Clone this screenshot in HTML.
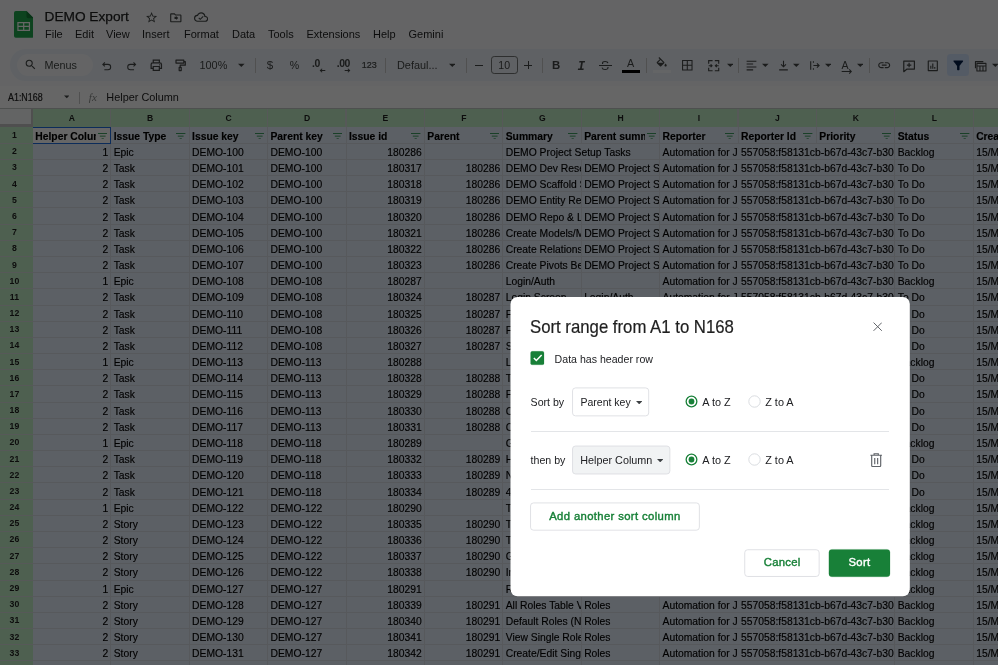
<!DOCTYPE html>
<html lang="en"><head><meta charset="utf-8"><title>DEMO Export - Google Sheets</title>
<style>
*{box-sizing:border-box;margin:0;padding:0}
html,body{width:998px;height:665px;overflow:hidden;background:#f9fbfd;font-family:"Liberation Sans",sans-serif;color:#1f1f1f}
body{position:relative}
.abs,#grid div,#chrome div,#chrome svg,#dialog div,#dialog svg{position:absolute}
#chrome{position:absolute;left:0;top:0;width:998px;height:108.3px;background:#f9fbfd;will-change:transform}
#grid{position:absolute;left:0;top:0;width:998px;height:665px;overflow:hidden;will-change:transform}
.colhdr{background:#c3f0c8}
.rowhdr{background:#c3f0c8}
.corner{left:0;top:108.3px;width:32.7px;height:18.6px;background:#f8f9fa;border-right:2.7px solid #c6c6c6;border-bottom:3px solid #c6c6c6}
.cells{background:#e7f0fd}
.cl{top:108.3px;height:18.8px;line-height:21.2px;text-align:center;font-size:8.6px;font-weight:700;color:#1f1f1f}
.rn{left:0;width:28.8px;height:16.15px;line-height:16.4px;text-align:center;font-size:8.7px;font-weight:700;color:#1f1f1f}
.vl{top:127.1px;width:1px;height:540px;background:#dadfe7}
.vlh{top:108.3px;width:1.2px;height:18.8px;background:#d8dedb}
.hl{left:32.7px;width:970px;height:1px;background:#dadfe7}
.hlh{left:0;width:32.7px;height:1px;background:#d8dedb}
.c{height:15.15px;margin-top:0.6px;line-height:18.6px;font-size:10.34px;white-space:nowrap;overflow:hidden;padding:0 2.3px 0 2.7px;color:#000;-webkit-text-stroke:.15px #000}
.c.r{text-align:right}
.c.ov{background:#e7f0fd}
.c.hd{font-weight:700}
.c.hd span{position:absolute;left:2.7px;top:0;width:60.5px;overflow:hidden;white-space:nowrap}
.fi{position:absolute;right:2.8px;top:5.1px;width:9.4px;height:6.3px}
.active{border:1.7px solid #1f6fe0;border-left-width:0;background:#fff}
#overlay{position:absolute;left:0;top:0;width:998px;height:665px;background:rgba(0,0,0,.6)}
#dialog{position:absolute;left:510px;top:297px;width:400px;height:300px;color:#202124;will-change:transform}
</style></head><body>
<div id="grid">
<div class="colhdr" style="left:0;top:108.30px;width:998px;height:18.80px"></div>
<div class="rowhdr" style="left:0;top:127.10px;width:32.60px;height:537.90px"></div>
<div class="corner"></div>
<div class="cells" style="left:32.60px;top:127.10px;width:965.40px;height:537.90px"></div>
<div class="cl" style="left:32.60px;width:78.41px">A</div>
<div class="vl" style="left:110.41px"></div>
<div class="vlh" style="left:110.20px"></div>
<div class="cl" style="left:111.00px;width:78.41px">B</div>
<div class="vl" style="left:188.81px"></div>
<div class="vlh" style="left:188.61px"></div>
<div class="cl" style="left:189.41px;width:78.41px">C</div>
<div class="vl" style="left:267.21px"></div>
<div class="vlh" style="left:267.01px"></div>
<div class="cl" style="left:267.81px;width:78.41px">D</div>
<div class="vl" style="left:345.62px"></div>
<div class="vlh" style="left:345.42px"></div>
<div class="cl" style="left:346.22px;width:78.41px">E</div>
<div class="vl" style="left:424.02px"></div>
<div class="vlh" style="left:423.82px"></div>
<div class="cl" style="left:424.62px;width:78.41px">F</div>
<div class="vl" style="left:502.43px"></div>
<div class="vlh" style="left:502.23px"></div>
<div class="cl" style="left:503.03px;width:78.41px">G</div>
<div class="vl" style="left:580.84px"></div>
<div class="vlh" style="left:580.64px"></div>
<div class="cl" style="left:581.44px;width:78.41px">H</div>
<div class="vl" style="left:659.24px"></div>
<div class="vlh" style="left:659.04px"></div>
<div class="cl" style="left:659.84px;width:78.41px">I</div>
<div class="vl" style="left:737.64px"></div>
<div class="vlh" style="left:737.45px"></div>
<div class="cl" style="left:738.25px;width:78.41px">J</div>
<div class="vl" style="left:816.05px"></div>
<div class="vlh" style="left:815.85px"></div>
<div class="cl" style="left:816.65px;width:78.41px">K</div>
<div class="vl" style="left:894.45px"></div>
<div class="vlh" style="left:894.25px"></div>
<div class="cl" style="left:895.06px;width:78.41px">L</div>
<div class="vl" style="left:972.86px"></div>
<div class="vlh" style="left:972.66px"></div>
<div class="cl" style="left:973.46px;width:78.41px">M</div>
<div class="vl" style="left:1051.27px"></div>
<div class="vlh" style="left:1051.07px"></div>
<div class="rn" style="top:127.10px">1</div>
<div class="hl" style="top:142.78px"></div>
<div class="hlh" style="top:142.78px"></div>
<div class="rn" style="top:143.28px">2</div>
<div class="hl" style="top:158.95px"></div>
<div class="hlh" style="top:158.95px"></div>
<div class="rn" style="top:159.45px">3</div>
<div class="hl" style="top:175.12px"></div>
<div class="hlh" style="top:175.12px"></div>
<div class="rn" style="top:175.62px">4</div>
<div class="hl" style="top:191.30px"></div>
<div class="hlh" style="top:191.30px"></div>
<div class="rn" style="top:191.80px">5</div>
<div class="hl" style="top:207.48px"></div>
<div class="hlh" style="top:207.48px"></div>
<div class="rn" style="top:207.97px">6</div>
<div class="hl" style="top:223.65px"></div>
<div class="hlh" style="top:223.65px"></div>
<div class="rn" style="top:224.15px">7</div>
<div class="hl" style="top:239.83px"></div>
<div class="hlh" style="top:239.83px"></div>
<div class="rn" style="top:240.32px">8</div>
<div class="hl" style="top:256.00px"></div>
<div class="hlh" style="top:256.00px"></div>
<div class="rn" style="top:256.50px">9</div>
<div class="hl" style="top:272.18px"></div>
<div class="hlh" style="top:272.18px"></div>
<div class="rn" style="top:272.68px">10</div>
<div class="hl" style="top:288.35px"></div>
<div class="hlh" style="top:288.35px"></div>
<div class="rn" style="top:288.85px">11</div>
<div class="hl" style="top:304.53px"></div>
<div class="hlh" style="top:304.53px"></div>
<div class="rn" style="top:305.02px">12</div>
<div class="hl" style="top:320.70px"></div>
<div class="hlh" style="top:320.70px"></div>
<div class="rn" style="top:321.20px">13</div>
<div class="hl" style="top:336.88px"></div>
<div class="hlh" style="top:336.88px"></div>
<div class="rn" style="top:337.38px">14</div>
<div class="hl" style="top:353.05px"></div>
<div class="hlh" style="top:353.05px"></div>
<div class="rn" style="top:353.55px">15</div>
<div class="hl" style="top:369.23px"></div>
<div class="hlh" style="top:369.23px"></div>
<div class="rn" style="top:369.73px">16</div>
<div class="hl" style="top:385.40px"></div>
<div class="hlh" style="top:385.40px"></div>
<div class="rn" style="top:385.90px">17</div>
<div class="hl" style="top:401.57px"></div>
<div class="hlh" style="top:401.57px"></div>
<div class="rn" style="top:402.08px">18</div>
<div class="hl" style="top:417.75px"></div>
<div class="hlh" style="top:417.75px"></div>
<div class="rn" style="top:418.25px">19</div>
<div class="hl" style="top:433.93px"></div>
<div class="hlh" style="top:433.93px"></div>
<div class="rn" style="top:434.42px">20</div>
<div class="hl" style="top:450.10px"></div>
<div class="hlh" style="top:450.10px"></div>
<div class="rn" style="top:450.60px">21</div>
<div class="hl" style="top:466.28px"></div>
<div class="hlh" style="top:466.28px"></div>
<div class="rn" style="top:466.77px">22</div>
<div class="hl" style="top:482.45px"></div>
<div class="hlh" style="top:482.45px"></div>
<div class="rn" style="top:482.95px">23</div>
<div class="hl" style="top:498.63px"></div>
<div class="hlh" style="top:498.63px"></div>
<div class="rn" style="top:499.12px">24</div>
<div class="hl" style="top:514.80px"></div>
<div class="hlh" style="top:514.80px"></div>
<div class="rn" style="top:515.30px">25</div>
<div class="hl" style="top:530.98px"></div>
<div class="hlh" style="top:530.98px"></div>
<div class="rn" style="top:531.48px">26</div>
<div class="hl" style="top:547.15px"></div>
<div class="hlh" style="top:547.15px"></div>
<div class="rn" style="top:547.65px">27</div>
<div class="hl" style="top:563.32px"></div>
<div class="hlh" style="top:563.32px"></div>
<div class="rn" style="top:563.83px">28</div>
<div class="hl" style="top:579.50px"></div>
<div class="hlh" style="top:579.50px"></div>
<div class="rn" style="top:580.00px">29</div>
<div class="hl" style="top:595.67px"></div>
<div class="hlh" style="top:595.67px"></div>
<div class="rn" style="top:596.18px">30</div>
<div class="hl" style="top:611.85px"></div>
<div class="hlh" style="top:611.85px"></div>
<div class="rn" style="top:612.35px">31</div>
<div class="hl" style="top:628.02px"></div>
<div class="hlh" style="top:628.02px"></div>
<div class="rn" style="top:628.52px">32</div>
<div class="hl" style="top:644.20px"></div>
<div class="hlh" style="top:644.20px"></div>
<div class="rn" style="top:644.70px">33</div>
<div class="hl" style="top:660.38px"></div>
<div class="hlh" style="top:660.38px"></div>
<div class="rn" style="top:660.88px">34</div>
<div class="hl" style="top:676.55px"></div>
<div class="hlh" style="top:676.55px"></div>
<div class="hl" style="top:692.73px"></div>
<div class="hlh" style="top:692.73px"></div>
<div class="active" style="left:32.60px;top:127.10px;width:78.81px;height:17.07px"></div>
<div class="c hd" style="left:32.60px;top:127.10px;width:77.41px"><span>Helper Column</span><svg class="fi" viewBox="0 0 12 8"><path d="M0 .6h12M2.3 4h7.4M4.6 7.4h2.8" stroke="#2c9650" stroke-width="1.15" fill="none"/></svg></div>
<div class="c hd" style="left:111.00px;top:127.10px;width:77.41px"><span>Issue Type</span><svg class="fi" viewBox="0 0 12 8"><path d="M0 .6h12M2.3 4h7.4M4.6 7.4h2.8" stroke="#2c9650" stroke-width="1.15" fill="none"/></svg></div>
<div class="c hd" style="left:189.41px;top:127.10px;width:77.41px"><span>Issue key</span><svg class="fi" viewBox="0 0 12 8"><path d="M0 .6h12M2.3 4h7.4M4.6 7.4h2.8" stroke="#2c9650" stroke-width="1.15" fill="none"/></svg></div>
<div class="c hd" style="left:267.81px;top:127.10px;width:77.41px"><span>Parent key</span><svg class="fi" viewBox="0 0 12 8"><path d="M0 .6h12M2.3 4h7.4M4.6 7.4h2.8" stroke="#2c9650" stroke-width="1.15" fill="none"/></svg></div>
<div class="c hd" style="left:346.22px;top:127.10px;width:77.41px"><span>Issue id</span><svg class="fi" viewBox="0 0 12 8"><path d="M0 .6h12M2.3 4h7.4M4.6 7.4h2.8" stroke="#2c9650" stroke-width="1.15" fill="none"/></svg></div>
<div class="c hd" style="left:424.62px;top:127.10px;width:77.41px"><span>Parent</span><svg class="fi" viewBox="0 0 12 8"><path d="M0 .6h12M2.3 4h7.4M4.6 7.4h2.8" stroke="#2c9650" stroke-width="1.15" fill="none"/></svg></div>
<div class="c hd" style="left:503.03px;top:127.10px;width:77.41px"><span>Summary</span><svg class="fi" viewBox="0 0 12 8"><path d="M0 .6h12M2.3 4h7.4M4.6 7.4h2.8" stroke="#2c9650" stroke-width="1.15" fill="none"/></svg></div>
<div class="c hd" style="left:581.44px;top:127.10px;width:77.41px"><span>Parent summary</span><svg class="fi" viewBox="0 0 12 8"><path d="M0 .6h12M2.3 4h7.4M4.6 7.4h2.8" stroke="#2c9650" stroke-width="1.15" fill="none"/></svg></div>
<div class="c hd" style="left:659.84px;top:127.10px;width:77.41px"><span>Reporter</span><svg class="fi" viewBox="0 0 12 8"><path d="M0 .6h12M2.3 4h7.4M4.6 7.4h2.8" stroke="#2c9650" stroke-width="1.15" fill="none"/></svg></div>
<div class="c hd" style="left:738.25px;top:127.10px;width:77.41px"><span>Reporter Id</span><svg class="fi" viewBox="0 0 12 8"><path d="M0 .6h12M2.3 4h7.4M4.6 7.4h2.8" stroke="#2c9650" stroke-width="1.15" fill="none"/></svg></div>
<div class="c hd" style="left:816.65px;top:127.10px;width:77.41px"><span>Priority</span><svg class="fi" viewBox="0 0 12 8"><path d="M0 .6h12M2.3 4h7.4M4.6 7.4h2.8" stroke="#2c9650" stroke-width="1.15" fill="none"/></svg></div>
<div class="c hd" style="left:895.06px;top:127.10px;width:77.41px"><span>Status</span><svg class="fi" viewBox="0 0 12 8"><path d="M0 .6h12M2.3 4h7.4M4.6 7.4h2.8" stroke="#2c9650" stroke-width="1.15" fill="none"/></svg></div>
<div class="c hd" style="left:973.46px;top:127.10px;width:77.41px"><span>Created</span><svg class="fi" viewBox="0 0 12 8"><path d="M0 .6h12M2.3 4h7.4M4.6 7.4h2.8" stroke="#2c9650" stroke-width="1.15" fill="none"/></svg></div>
<div class="c r" style="left:32.60px;top:143.28px;width:77.91px">1</div>
<div class="c" style="left:111.00px;top:143.28px;width:77.91px">Epic</div>
<div class="c" style="left:189.41px;top:143.28px;width:77.91px">DEMO-100</div>
<div class="c" style="left:267.81px;top:143.28px;width:77.91px">DEMO-100</div>
<div class="c r" style="left:346.22px;top:143.28px;width:77.91px">180286</div>
<div class="c ov" style="left:503.03px;top:143.28px;width:155.81px">DEMO Project Setup Tasks</div>
<div class="c" style="left:659.84px;top:143.28px;width:77.91px">Automation for Jira</div>
<div class="c ov" style="left:738.25px;top:143.28px;width:155.81px">557058:f58131cb-b67d-43c7-b30</div>
<div class="c" style="left:895.06px;top:143.28px;width:77.91px">Backlog</div>
<div class="c" style="left:973.46px;top:143.28px;width:77.91px">15/M</div>
<div class="c r" style="left:32.60px;top:159.45px;width:77.91px">2</div>
<div class="c" style="left:111.00px;top:159.45px;width:77.91px">Task</div>
<div class="c" style="left:189.41px;top:159.45px;width:77.91px">DEMO-101</div>
<div class="c" style="left:267.81px;top:159.45px;width:77.91px">DEMO-100</div>
<div class="c r" style="left:346.22px;top:159.45px;width:77.91px">180317</div>
<div class="c r" style="left:424.62px;top:159.45px;width:77.91px">180286</div>
<div class="c" style="left:503.03px;top:159.45px;width:77.91px">DEMO Dev Research</div>
<div class="c" style="left:581.44px;top:159.45px;width:77.91px">DEMO Project Setup Tasks</div>
<div class="c" style="left:659.84px;top:159.45px;width:77.91px">Automation for Jira</div>
<div class="c ov" style="left:738.25px;top:159.45px;width:155.81px">557058:f58131cb-b67d-43c7-b30</div>
<div class="c" style="left:895.06px;top:159.45px;width:77.91px">To Do</div>
<div class="c" style="left:973.46px;top:159.45px;width:77.91px">15/M</div>
<div class="c r" style="left:32.60px;top:175.62px;width:77.91px">2</div>
<div class="c" style="left:111.00px;top:175.62px;width:77.91px">Task</div>
<div class="c" style="left:189.41px;top:175.62px;width:77.91px">DEMO-102</div>
<div class="c" style="left:267.81px;top:175.62px;width:77.91px">DEMO-100</div>
<div class="c r" style="left:346.22px;top:175.62px;width:77.91px">180318</div>
<div class="c r" style="left:424.62px;top:175.62px;width:77.91px">180286</div>
<div class="c" style="left:503.03px;top:175.62px;width:77.91px">DEMO Scaffold Setup</div>
<div class="c" style="left:581.44px;top:175.62px;width:77.91px">DEMO Project Setup Tasks</div>
<div class="c" style="left:659.84px;top:175.62px;width:77.91px">Automation for Jira</div>
<div class="c ov" style="left:738.25px;top:175.62px;width:155.81px">557058:f58131cb-b67d-43c7-b30</div>
<div class="c" style="left:895.06px;top:175.62px;width:77.91px">To Do</div>
<div class="c" style="left:973.46px;top:175.62px;width:77.91px">15/M</div>
<div class="c r" style="left:32.60px;top:191.80px;width:77.91px">2</div>
<div class="c" style="left:111.00px;top:191.80px;width:77.91px">Task</div>
<div class="c" style="left:189.41px;top:191.80px;width:77.91px">DEMO-103</div>
<div class="c" style="left:267.81px;top:191.80px;width:77.91px">DEMO-100</div>
<div class="c r" style="left:346.22px;top:191.80px;width:77.91px">180319</div>
<div class="c r" style="left:424.62px;top:191.80px;width:77.91px">180286</div>
<div class="c" style="left:503.03px;top:191.80px;width:77.91px">DEMO Entity Relations</div>
<div class="c" style="left:581.44px;top:191.80px;width:77.91px">DEMO Project Setup Tasks</div>
<div class="c" style="left:659.84px;top:191.80px;width:77.91px">Automation for Jira</div>
<div class="c ov" style="left:738.25px;top:191.80px;width:155.81px">557058:f58131cb-b67d-43c7-b30</div>
<div class="c" style="left:895.06px;top:191.80px;width:77.91px">To Do</div>
<div class="c" style="left:973.46px;top:191.80px;width:77.91px">15/M</div>
<div class="c r" style="left:32.60px;top:207.97px;width:77.91px">2</div>
<div class="c" style="left:111.00px;top:207.97px;width:77.91px">Task</div>
<div class="c" style="left:189.41px;top:207.97px;width:77.91px">DEMO-104</div>
<div class="c" style="left:267.81px;top:207.97px;width:77.91px">DEMO-100</div>
<div class="c r" style="left:346.22px;top:207.97px;width:77.91px">180320</div>
<div class="c r" style="left:424.62px;top:207.97px;width:77.91px">180286</div>
<div class="c" style="left:503.03px;top:207.97px;width:77.91px">DEMO Repo &amp; Labels</div>
<div class="c" style="left:581.44px;top:207.97px;width:77.91px">DEMO Project Setup Tasks</div>
<div class="c" style="left:659.84px;top:207.97px;width:77.91px">Automation for Jira</div>
<div class="c ov" style="left:738.25px;top:207.97px;width:155.81px">557058:f58131cb-b67d-43c7-b30</div>
<div class="c" style="left:895.06px;top:207.97px;width:77.91px">To Do</div>
<div class="c" style="left:973.46px;top:207.97px;width:77.91px">15/M</div>
<div class="c r" style="left:32.60px;top:224.15px;width:77.91px">2</div>
<div class="c" style="left:111.00px;top:224.15px;width:77.91px">Task</div>
<div class="c" style="left:189.41px;top:224.15px;width:77.91px">DEMO-105</div>
<div class="c" style="left:267.81px;top:224.15px;width:77.91px">DEMO-100</div>
<div class="c r" style="left:346.22px;top:224.15px;width:77.91px">180321</div>
<div class="c r" style="left:424.62px;top:224.15px;width:77.91px">180286</div>
<div class="c" style="left:503.03px;top:224.15px;width:77.91px">Create Models/Migrations</div>
<div class="c" style="left:581.44px;top:224.15px;width:77.91px">DEMO Project Setup Tasks</div>
<div class="c" style="left:659.84px;top:224.15px;width:77.91px">Automation for Jira</div>
<div class="c ov" style="left:738.25px;top:224.15px;width:155.81px">557058:f58131cb-b67d-43c7-b30</div>
<div class="c" style="left:895.06px;top:224.15px;width:77.91px">To Do</div>
<div class="c" style="left:973.46px;top:224.15px;width:77.91px">15/M</div>
<div class="c r" style="left:32.60px;top:240.32px;width:77.91px">2</div>
<div class="c" style="left:111.00px;top:240.32px;width:77.91px">Task</div>
<div class="c" style="left:189.41px;top:240.32px;width:77.91px">DEMO-106</div>
<div class="c" style="left:267.81px;top:240.32px;width:77.91px">DEMO-100</div>
<div class="c r" style="left:346.22px;top:240.32px;width:77.91px">180322</div>
<div class="c r" style="left:424.62px;top:240.32px;width:77.91px">180286</div>
<div class="c" style="left:503.03px;top:240.32px;width:77.91px">Create Relationships</div>
<div class="c" style="left:581.44px;top:240.32px;width:77.91px">DEMO Project Setup Tasks</div>
<div class="c" style="left:659.84px;top:240.32px;width:77.91px">Automation for Jira</div>
<div class="c ov" style="left:738.25px;top:240.32px;width:155.81px">557058:f58131cb-b67d-43c7-b30</div>
<div class="c" style="left:895.06px;top:240.32px;width:77.91px">To Do</div>
<div class="c" style="left:973.46px;top:240.32px;width:77.91px">15/M</div>
<div class="c r" style="left:32.60px;top:256.50px;width:77.91px">2</div>
<div class="c" style="left:111.00px;top:256.50px;width:77.91px">Task</div>
<div class="c" style="left:189.41px;top:256.50px;width:77.91px">DEMO-107</div>
<div class="c" style="left:267.81px;top:256.50px;width:77.91px">DEMO-100</div>
<div class="c r" style="left:346.22px;top:256.50px;width:77.91px">180323</div>
<div class="c r" style="left:424.62px;top:256.50px;width:77.91px">180286</div>
<div class="c" style="left:503.03px;top:256.50px;width:77.91px">Create Pivots Between</div>
<div class="c" style="left:581.44px;top:256.50px;width:77.91px">DEMO Project Setup Tasks</div>
<div class="c" style="left:659.84px;top:256.50px;width:77.91px">Automation for Jira</div>
<div class="c ov" style="left:738.25px;top:256.50px;width:155.81px">557058:f58131cb-b67d-43c7-b30</div>
<div class="c" style="left:895.06px;top:256.50px;width:77.91px">To Do</div>
<div class="c" style="left:973.46px;top:256.50px;width:77.91px">15/M</div>
<div class="c r" style="left:32.60px;top:272.68px;width:77.91px">1</div>
<div class="c" style="left:111.00px;top:272.68px;width:77.91px">Epic</div>
<div class="c" style="left:189.41px;top:272.68px;width:77.91px">DEMO-108</div>
<div class="c" style="left:267.81px;top:272.68px;width:77.91px">DEMO-108</div>
<div class="c r" style="left:346.22px;top:272.68px;width:77.91px">180287</div>
<div class="c" style="left:503.03px;top:272.68px;width:77.91px">Login/Auth</div>
<div class="c" style="left:659.84px;top:272.68px;width:77.91px">Automation for Jira</div>
<div class="c ov" style="left:738.25px;top:272.68px;width:155.81px">557058:f58131cb-b67d-43c7-b30</div>
<div class="c" style="left:895.06px;top:272.68px;width:77.91px">Backlog</div>
<div class="c" style="left:973.46px;top:272.68px;width:77.91px">15/M</div>
<div class="c r" style="left:32.60px;top:288.85px;width:77.91px">2</div>
<div class="c" style="left:111.00px;top:288.85px;width:77.91px">Task</div>
<div class="c" style="left:189.41px;top:288.85px;width:77.91px">DEMO-109</div>
<div class="c" style="left:267.81px;top:288.85px;width:77.91px">DEMO-108</div>
<div class="c r" style="left:346.22px;top:288.85px;width:77.91px">180324</div>
<div class="c r" style="left:424.62px;top:288.85px;width:77.91px">180287</div>
<div class="c" style="left:503.03px;top:288.85px;width:77.91px">Login Screen</div>
<div class="c" style="left:581.44px;top:288.85px;width:77.91px">Login/Auth</div>
<div class="c" style="left:659.84px;top:288.85px;width:77.91px">Automation for Jira</div>
<div class="c ov" style="left:738.25px;top:288.85px;width:155.81px">557058:f58131cb-b67d-43c7-b30</div>
<div class="c" style="left:895.06px;top:288.85px;width:77.91px">To Do</div>
<div class="c" style="left:973.46px;top:288.85px;width:77.91px">15/M</div>
<div class="c r" style="left:32.60px;top:305.02px;width:77.91px">2</div>
<div class="c" style="left:111.00px;top:305.02px;width:77.91px">Task</div>
<div class="c" style="left:189.41px;top:305.02px;width:77.91px">DEMO-110</div>
<div class="c" style="left:267.81px;top:305.02px;width:77.91px">DEMO-108</div>
<div class="c r" style="left:346.22px;top:305.02px;width:77.91px">180325</div>
<div class="c r" style="left:424.62px;top:305.02px;width:77.91px">180287</div>
<div class="c" style="left:503.03px;top:305.02px;width:77.91px">Forgot Password</div>
<div class="c" style="left:581.44px;top:305.02px;width:77.91px">Login/Auth</div>
<div class="c" style="left:659.84px;top:305.02px;width:77.91px">Automation for Jira</div>
<div class="c ov" style="left:738.25px;top:305.02px;width:155.81px">557058:f58131cb-b67d-43c7-b30</div>
<div class="c" style="left:895.06px;top:305.02px;width:77.91px">To Do</div>
<div class="c" style="left:973.46px;top:305.02px;width:77.91px">15/M</div>
<div class="c r" style="left:32.60px;top:321.20px;width:77.91px">2</div>
<div class="c" style="left:111.00px;top:321.20px;width:77.91px">Task</div>
<div class="c" style="left:189.41px;top:321.20px;width:77.91px">DEMO-111</div>
<div class="c" style="left:267.81px;top:321.20px;width:77.91px">DEMO-108</div>
<div class="c r" style="left:346.22px;top:321.20px;width:77.91px">180326</div>
<div class="c r" style="left:424.62px;top:321.20px;width:77.91px">180287</div>
<div class="c" style="left:503.03px;top:321.20px;width:77.91px">Facebook Login</div>
<div class="c" style="left:581.44px;top:321.20px;width:77.91px">Login/Auth</div>
<div class="c" style="left:659.84px;top:321.20px;width:77.91px">Automation for Jira</div>
<div class="c ov" style="left:738.25px;top:321.20px;width:155.81px">557058:f58131cb-b67d-43c7-b30</div>
<div class="c" style="left:895.06px;top:321.20px;width:77.91px">To Do</div>
<div class="c" style="left:973.46px;top:321.20px;width:77.91px">15/M</div>
<div class="c r" style="left:32.60px;top:337.38px;width:77.91px">2</div>
<div class="c" style="left:111.00px;top:337.38px;width:77.91px">Task</div>
<div class="c" style="left:189.41px;top:337.38px;width:77.91px">DEMO-112</div>
<div class="c" style="left:267.81px;top:337.38px;width:77.91px">DEMO-108</div>
<div class="c r" style="left:346.22px;top:337.38px;width:77.91px">180327</div>
<div class="c r" style="left:424.62px;top:337.38px;width:77.91px">180287</div>
<div class="c" style="left:503.03px;top:337.38px;width:77.91px">Social Login</div>
<div class="c" style="left:581.44px;top:337.38px;width:77.91px">Login/Auth</div>
<div class="c" style="left:659.84px;top:337.38px;width:77.91px">Automation for Jira</div>
<div class="c ov" style="left:738.25px;top:337.38px;width:155.81px">557058:f58131cb-b67d-43c7-b30</div>
<div class="c" style="left:895.06px;top:337.38px;width:77.91px">To Do</div>
<div class="c" style="left:973.46px;top:337.38px;width:77.91px">15/M</div>
<div class="c r" style="left:32.60px;top:353.55px;width:77.91px">1</div>
<div class="c" style="left:111.00px;top:353.55px;width:77.91px">Epic</div>
<div class="c" style="left:189.41px;top:353.55px;width:77.91px">DEMO-113</div>
<div class="c" style="left:267.81px;top:353.55px;width:77.91px">DEMO-113</div>
<div class="c r" style="left:346.22px;top:353.55px;width:77.91px">180288</div>
<div class="c" style="left:503.03px;top:353.55px;width:77.91px">Landing Page</div>
<div class="c" style="left:659.84px;top:353.55px;width:77.91px">Automation for Jira</div>
<div class="c ov" style="left:738.25px;top:353.55px;width:155.81px">557058:f58131cb-b67d-43c7-b30</div>
<div class="c" style="left:895.06px;top:353.55px;width:77.91px">Backlog</div>
<div class="c" style="left:973.46px;top:353.55px;width:77.91px">15/M</div>
<div class="c r" style="left:32.60px;top:369.73px;width:77.91px">2</div>
<div class="c" style="left:111.00px;top:369.73px;width:77.91px">Task</div>
<div class="c" style="left:189.41px;top:369.73px;width:77.91px">DEMO-114</div>
<div class="c" style="left:267.81px;top:369.73px;width:77.91px">DEMO-113</div>
<div class="c r" style="left:346.22px;top:369.73px;width:77.91px">180328</div>
<div class="c r" style="left:424.62px;top:369.73px;width:77.91px">180288</div>
<div class="c" style="left:503.03px;top:369.73px;width:77.91px">Top Navigation</div>
<div class="c" style="left:581.44px;top:369.73px;width:77.91px">Landing Page</div>
<div class="c" style="left:659.84px;top:369.73px;width:77.91px">Automation for Jira</div>
<div class="c ov" style="left:738.25px;top:369.73px;width:155.81px">557058:f58131cb-b67d-43c7-b30</div>
<div class="c" style="left:895.06px;top:369.73px;width:77.91px">To Do</div>
<div class="c" style="left:973.46px;top:369.73px;width:77.91px">15/M</div>
<div class="c r" style="left:32.60px;top:385.90px;width:77.91px">2</div>
<div class="c" style="left:111.00px;top:385.90px;width:77.91px">Task</div>
<div class="c" style="left:189.41px;top:385.90px;width:77.91px">DEMO-115</div>
<div class="c" style="left:267.81px;top:385.90px;width:77.91px">DEMO-113</div>
<div class="c r" style="left:346.22px;top:385.90px;width:77.91px">180329</div>
<div class="c r" style="left:424.62px;top:385.90px;width:77.91px">180288</div>
<div class="c" style="left:503.03px;top:385.90px;width:77.91px">Footer Links</div>
<div class="c" style="left:581.44px;top:385.90px;width:77.91px">Landing Page</div>
<div class="c" style="left:659.84px;top:385.90px;width:77.91px">Automation for Jira</div>
<div class="c ov" style="left:738.25px;top:385.90px;width:155.81px">557058:f58131cb-b67d-43c7-b30</div>
<div class="c" style="left:895.06px;top:385.90px;width:77.91px">To Do</div>
<div class="c" style="left:973.46px;top:385.90px;width:77.91px">15/M</div>
<div class="c r" style="left:32.60px;top:402.08px;width:77.91px">2</div>
<div class="c" style="left:111.00px;top:402.08px;width:77.91px">Task</div>
<div class="c" style="left:189.41px;top:402.08px;width:77.91px">DEMO-116</div>
<div class="c" style="left:267.81px;top:402.08px;width:77.91px">DEMO-113</div>
<div class="c r" style="left:346.22px;top:402.08px;width:77.91px">180330</div>
<div class="c r" style="left:424.62px;top:402.08px;width:77.91px">180288</div>
<div class="c" style="left:503.03px;top:402.08px;width:77.91px">Contact Form</div>
<div class="c" style="left:581.44px;top:402.08px;width:77.91px">Landing Page</div>
<div class="c" style="left:659.84px;top:402.08px;width:77.91px">Automation for Jira</div>
<div class="c ov" style="left:738.25px;top:402.08px;width:155.81px">557058:f58131cb-b67d-43c7-b30</div>
<div class="c" style="left:895.06px;top:402.08px;width:77.91px">To Do</div>
<div class="c" style="left:973.46px;top:402.08px;width:77.91px">15/M</div>
<div class="c r" style="left:32.60px;top:418.25px;width:77.91px">2</div>
<div class="c" style="left:111.00px;top:418.25px;width:77.91px">Task</div>
<div class="c" style="left:189.41px;top:418.25px;width:77.91px">DEMO-117</div>
<div class="c" style="left:267.81px;top:418.25px;width:77.91px">DEMO-113</div>
<div class="c r" style="left:346.22px;top:418.25px;width:77.91px">180331</div>
<div class="c r" style="left:424.62px;top:418.25px;width:77.91px">180288</div>
<div class="c" style="left:503.03px;top:418.25px;width:77.91px">Cookie Banner</div>
<div class="c" style="left:581.44px;top:418.25px;width:77.91px">Landing Page</div>
<div class="c" style="left:659.84px;top:418.25px;width:77.91px">Automation for Jira</div>
<div class="c ov" style="left:738.25px;top:418.25px;width:155.81px">557058:f58131cb-b67d-43c7-b30</div>
<div class="c" style="left:895.06px;top:418.25px;width:77.91px">To Do</div>
<div class="c" style="left:973.46px;top:418.25px;width:77.91px">15/M</div>
<div class="c r" style="left:32.60px;top:434.42px;width:77.91px">1</div>
<div class="c" style="left:111.00px;top:434.42px;width:77.91px">Epic</div>
<div class="c" style="left:189.41px;top:434.42px;width:77.91px">DEMO-118</div>
<div class="c" style="left:267.81px;top:434.42px;width:77.91px">DEMO-118</div>
<div class="c r" style="left:346.22px;top:434.42px;width:77.91px">180289</div>
<div class="c" style="left:503.03px;top:434.42px;width:77.91px">Global Settings</div>
<div class="c" style="left:659.84px;top:434.42px;width:77.91px">Automation for Jira</div>
<div class="c ov" style="left:738.25px;top:434.42px;width:155.81px">557058:f58131cb-b67d-43c7-b30</div>
<div class="c" style="left:895.06px;top:434.42px;width:77.91px">Backlog</div>
<div class="c" style="left:973.46px;top:434.42px;width:77.91px">15/M</div>
<div class="c r" style="left:32.60px;top:450.60px;width:77.91px">2</div>
<div class="c" style="left:111.00px;top:450.60px;width:77.91px">Task</div>
<div class="c" style="left:189.41px;top:450.60px;width:77.91px">DEMO-119</div>
<div class="c" style="left:267.81px;top:450.60px;width:77.91px">DEMO-118</div>
<div class="c r" style="left:346.22px;top:450.60px;width:77.91px">180332</div>
<div class="c r" style="left:424.62px;top:450.60px;width:77.91px">180289</div>
<div class="c" style="left:503.03px;top:450.60px;width:77.91px">Header Settings</div>
<div class="c" style="left:581.44px;top:450.60px;width:77.91px">Global Settings</div>
<div class="c" style="left:659.84px;top:450.60px;width:77.91px">Automation for Jira</div>
<div class="c ov" style="left:738.25px;top:450.60px;width:155.81px">557058:f58131cb-b67d-43c7-b30</div>
<div class="c" style="left:895.06px;top:450.60px;width:77.91px">To Do</div>
<div class="c" style="left:973.46px;top:450.60px;width:77.91px">15/M</div>
<div class="c r" style="left:32.60px;top:466.77px;width:77.91px">2</div>
<div class="c" style="left:111.00px;top:466.77px;width:77.91px">Task</div>
<div class="c" style="left:189.41px;top:466.77px;width:77.91px">DEMO-120</div>
<div class="c" style="left:267.81px;top:466.77px;width:77.91px">DEMO-118</div>
<div class="c r" style="left:346.22px;top:466.77px;width:77.91px">180333</div>
<div class="c r" style="left:424.62px;top:466.77px;width:77.91px">180289</div>
<div class="c" style="left:503.03px;top:466.77px;width:77.91px">Notification Settings</div>
<div class="c" style="left:581.44px;top:466.77px;width:77.91px">Global Settings</div>
<div class="c" style="left:659.84px;top:466.77px;width:77.91px">Automation for Jira</div>
<div class="c ov" style="left:738.25px;top:466.77px;width:155.81px">557058:f58131cb-b67d-43c7-b30</div>
<div class="c" style="left:895.06px;top:466.77px;width:77.91px">To Do</div>
<div class="c" style="left:973.46px;top:466.77px;width:77.91px">15/M</div>
<div class="c r" style="left:32.60px;top:482.95px;width:77.91px">2</div>
<div class="c" style="left:111.00px;top:482.95px;width:77.91px">Task</div>
<div class="c" style="left:189.41px;top:482.95px;width:77.91px">DEMO-121</div>
<div class="c" style="left:267.81px;top:482.95px;width:77.91px">DEMO-118</div>
<div class="c r" style="left:346.22px;top:482.95px;width:77.91px">180334</div>
<div class="c r" style="left:424.62px;top:482.95px;width:77.91px">180289</div>
<div class="c" style="left:503.03px;top:482.95px;width:77.91px">404 Page</div>
<div class="c" style="left:581.44px;top:482.95px;width:77.91px">Global Settings</div>
<div class="c" style="left:659.84px;top:482.95px;width:77.91px">Automation for Jira</div>
<div class="c ov" style="left:738.25px;top:482.95px;width:155.81px">557058:f58131cb-b67d-43c7-b30</div>
<div class="c" style="left:895.06px;top:482.95px;width:77.91px">To Do</div>
<div class="c" style="left:973.46px;top:482.95px;width:77.91px">15/M</div>
<div class="c r" style="left:32.60px;top:499.12px;width:77.91px">1</div>
<div class="c" style="left:111.00px;top:499.12px;width:77.91px">Epic</div>
<div class="c" style="left:189.41px;top:499.12px;width:77.91px">DEMO-122</div>
<div class="c" style="left:267.81px;top:499.12px;width:77.91px">DEMO-122</div>
<div class="c r" style="left:346.22px;top:499.12px;width:77.91px">180290</div>
<div class="c" style="left:503.03px;top:499.12px;width:77.91px">Teams</div>
<div class="c" style="left:659.84px;top:499.12px;width:77.91px">Automation for Jira</div>
<div class="c ov" style="left:738.25px;top:499.12px;width:155.81px">557058:f58131cb-b67d-43c7-b30</div>
<div class="c" style="left:895.06px;top:499.12px;width:77.91px">Backlog</div>
<div class="c" style="left:973.46px;top:499.12px;width:77.91px">15/M</div>
<div class="c r" style="left:32.60px;top:515.30px;width:77.91px">2</div>
<div class="c" style="left:111.00px;top:515.30px;width:77.91px">Story</div>
<div class="c" style="left:189.41px;top:515.30px;width:77.91px">DEMO-123</div>
<div class="c" style="left:267.81px;top:515.30px;width:77.91px">DEMO-122</div>
<div class="c r" style="left:346.22px;top:515.30px;width:77.91px">180335</div>
<div class="c r" style="left:424.62px;top:515.30px;width:77.91px">180290</div>
<div class="c" style="left:503.03px;top:515.30px;width:77.91px">Teams Table View</div>
<div class="c" style="left:581.44px;top:515.30px;width:77.91px">Teams</div>
<div class="c" style="left:659.84px;top:515.30px;width:77.91px">Automation for Jira</div>
<div class="c ov" style="left:738.25px;top:515.30px;width:155.81px">557058:f58131cb-b67d-43c7-b30</div>
<div class="c" style="left:895.06px;top:515.30px;width:77.91px">Backlog</div>
<div class="c" style="left:973.46px;top:515.30px;width:77.91px">15/M</div>
<div class="c r" style="left:32.60px;top:531.48px;width:77.91px">2</div>
<div class="c" style="left:111.00px;top:531.48px;width:77.91px">Story</div>
<div class="c" style="left:189.41px;top:531.48px;width:77.91px">DEMO-124</div>
<div class="c" style="left:267.81px;top:531.48px;width:77.91px">DEMO-122</div>
<div class="c r" style="left:346.22px;top:531.48px;width:77.91px">180336</div>
<div class="c r" style="left:424.62px;top:531.48px;width:77.91px">180290</div>
<div class="c" style="left:503.03px;top:531.48px;width:77.91px">Team Single View</div>
<div class="c" style="left:581.44px;top:531.48px;width:77.91px">Teams</div>
<div class="c" style="left:659.84px;top:531.48px;width:77.91px">Automation for Jira</div>
<div class="c ov" style="left:738.25px;top:531.48px;width:155.81px">557058:f58131cb-b67d-43c7-b30</div>
<div class="c" style="left:895.06px;top:531.48px;width:77.91px">Backlog</div>
<div class="c" style="left:973.46px;top:531.48px;width:77.91px">15/M</div>
<div class="c r" style="left:32.60px;top:547.65px;width:77.91px">2</div>
<div class="c" style="left:111.00px;top:547.65px;width:77.91px">Story</div>
<div class="c" style="left:189.41px;top:547.65px;width:77.91px">DEMO-125</div>
<div class="c" style="left:267.81px;top:547.65px;width:77.91px">DEMO-122</div>
<div class="c r" style="left:346.22px;top:547.65px;width:77.91px">180337</div>
<div class="c r" style="left:424.62px;top:547.65px;width:77.91px">180290</div>
<div class="c" style="left:503.03px;top:547.65px;width:77.91px">Group Members</div>
<div class="c" style="left:581.44px;top:547.65px;width:77.91px">Teams</div>
<div class="c" style="left:659.84px;top:547.65px;width:77.91px">Automation for Jira</div>
<div class="c ov" style="left:738.25px;top:547.65px;width:155.81px">557058:f58131cb-b67d-43c7-b30</div>
<div class="c" style="left:895.06px;top:547.65px;width:77.91px">Backlog</div>
<div class="c" style="left:973.46px;top:547.65px;width:77.91px">15/M</div>
<div class="c r" style="left:32.60px;top:563.83px;width:77.91px">2</div>
<div class="c" style="left:111.00px;top:563.83px;width:77.91px">Story</div>
<div class="c" style="left:189.41px;top:563.83px;width:77.91px">DEMO-126</div>
<div class="c" style="left:267.81px;top:563.83px;width:77.91px">DEMO-122</div>
<div class="c r" style="left:346.22px;top:563.83px;width:77.91px">180338</div>
<div class="c r" style="left:424.62px;top:563.83px;width:77.91px">180290</div>
<div class="c" style="left:503.03px;top:563.83px;width:77.91px">Invite Members</div>
<div class="c" style="left:581.44px;top:563.83px;width:77.91px">Teams</div>
<div class="c" style="left:659.84px;top:563.83px;width:77.91px">Automation for Jira</div>
<div class="c ov" style="left:738.25px;top:563.83px;width:155.81px">557058:f58131cb-b67d-43c7-b30</div>
<div class="c" style="left:895.06px;top:563.83px;width:77.91px">Backlog</div>
<div class="c" style="left:973.46px;top:563.83px;width:77.91px">15/M</div>
<div class="c r" style="left:32.60px;top:580.00px;width:77.91px">1</div>
<div class="c" style="left:111.00px;top:580.00px;width:77.91px">Epic</div>
<div class="c" style="left:189.41px;top:580.00px;width:77.91px">DEMO-127</div>
<div class="c" style="left:267.81px;top:580.00px;width:77.91px">DEMO-127</div>
<div class="c r" style="left:346.22px;top:580.00px;width:77.91px">180291</div>
<div class="c" style="left:503.03px;top:580.00px;width:77.91px">Roles</div>
<div class="c" style="left:659.84px;top:580.00px;width:77.91px">Automation for Jira</div>
<div class="c ov" style="left:738.25px;top:580.00px;width:155.81px">557058:f58131cb-b67d-43c7-b30</div>
<div class="c" style="left:895.06px;top:580.00px;width:77.91px">Backlog</div>
<div class="c" style="left:973.46px;top:580.00px;width:77.91px">15/M</div>
<div class="c r" style="left:32.60px;top:596.18px;width:77.91px">2</div>
<div class="c" style="left:111.00px;top:596.18px;width:77.91px">Story</div>
<div class="c" style="left:189.41px;top:596.18px;width:77.91px">DEMO-128</div>
<div class="c" style="left:267.81px;top:596.18px;width:77.91px">DEMO-127</div>
<div class="c r" style="left:346.22px;top:596.18px;width:77.91px">180339</div>
<div class="c r" style="left:424.62px;top:596.18px;width:77.91px">180291</div>
<div class="c" style="left:503.03px;top:596.18px;width:77.91px">All Roles Table View</div>
<div class="c" style="left:581.44px;top:596.18px;width:77.91px">Roles</div>
<div class="c" style="left:659.84px;top:596.18px;width:77.91px">Automation for Jira</div>
<div class="c ov" style="left:738.25px;top:596.18px;width:155.81px">557058:f58131cb-b67d-43c7-b30</div>
<div class="c" style="left:895.06px;top:596.18px;width:77.91px">Backlog</div>
<div class="c" style="left:973.46px;top:596.18px;width:77.91px">15/M</div>
<div class="c r" style="left:32.60px;top:612.35px;width:77.91px">2</div>
<div class="c" style="left:111.00px;top:612.35px;width:77.91px">Story</div>
<div class="c" style="left:189.41px;top:612.35px;width:77.91px">DEMO-129</div>
<div class="c" style="left:267.81px;top:612.35px;width:77.91px">DEMO-127</div>
<div class="c r" style="left:346.22px;top:612.35px;width:77.91px">180340</div>
<div class="c r" style="left:424.62px;top:612.35px;width:77.91px">180291</div>
<div class="c" style="left:503.03px;top:612.35px;width:77.91px">Default Roles (Non editable)</div>
<div class="c" style="left:581.44px;top:612.35px;width:77.91px">Roles</div>
<div class="c" style="left:659.84px;top:612.35px;width:77.91px">Automation for Jira</div>
<div class="c ov" style="left:738.25px;top:612.35px;width:155.81px">557058:f58131cb-b67d-43c7-b30</div>
<div class="c" style="left:895.06px;top:612.35px;width:77.91px">Backlog</div>
<div class="c" style="left:973.46px;top:612.35px;width:77.91px">15/M</div>
<div class="c r" style="left:32.60px;top:628.52px;width:77.91px">2</div>
<div class="c" style="left:111.00px;top:628.52px;width:77.91px">Story</div>
<div class="c" style="left:189.41px;top:628.52px;width:77.91px">DEMO-130</div>
<div class="c" style="left:267.81px;top:628.52px;width:77.91px">DEMO-127</div>
<div class="c r" style="left:346.22px;top:628.52px;width:77.91px">180341</div>
<div class="c r" style="left:424.62px;top:628.52px;width:77.91px">180291</div>
<div class="c" style="left:503.03px;top:628.52px;width:77.91px">View Single Role</div>
<div class="c" style="left:581.44px;top:628.52px;width:77.91px">Roles</div>
<div class="c" style="left:659.84px;top:628.52px;width:77.91px">Automation for Jira</div>
<div class="c ov" style="left:738.25px;top:628.52px;width:155.81px">557058:f58131cb-b67d-43c7-b30</div>
<div class="c" style="left:895.06px;top:628.52px;width:77.91px">Backlog</div>
<div class="c" style="left:973.46px;top:628.52px;width:77.91px">15/M</div>
<div class="c r" style="left:32.60px;top:644.70px;width:77.91px">2</div>
<div class="c" style="left:111.00px;top:644.70px;width:77.91px">Story</div>
<div class="c" style="left:189.41px;top:644.70px;width:77.91px">DEMO-131</div>
<div class="c" style="left:267.81px;top:644.70px;width:77.91px">DEMO-127</div>
<div class="c r" style="left:346.22px;top:644.70px;width:77.91px">180342</div>
<div class="c r" style="left:424.62px;top:644.70px;width:77.91px">180291</div>
<div class="c" style="left:503.03px;top:644.70px;width:77.91px">Create/Edit Single Role</div>
<div class="c" style="left:581.44px;top:644.70px;width:77.91px">Roles</div>
<div class="c" style="left:659.84px;top:644.70px;width:77.91px">Automation for Jira</div>
<div class="c ov" style="left:738.25px;top:644.70px;width:155.81px">557058:f58131cb-b67d-43c7-b30</div>
<div class="c" style="left:895.06px;top:644.70px;width:77.91px">Backlog</div>
<div class="c" style="left:973.46px;top:644.70px;width:77.91px">15/M</div>
<div class="c r" style="left:32.60px;top:660.88px;width:77.91px">2</div>
<div class="c" style="left:111.00px;top:660.88px;width:77.91px">Story</div>
<div class="c" style="left:189.41px;top:660.88px;width:77.91px">DEMO-132</div>
<div class="c" style="left:267.81px;top:660.88px;width:77.91px">DEMO-127</div>
<div class="c r" style="left:346.22px;top:660.88px;width:77.91px">180343</div>
<div class="c r" style="left:424.62px;top:660.88px;width:77.91px">180291</div>
<div class="c" style="left:503.03px;top:660.88px;width:77.91px">Delete Role</div>
<div class="c" style="left:581.44px;top:660.88px;width:77.91px">Roles</div>
<div class="c" style="left:659.84px;top:660.88px;width:77.91px">Automation for Jira</div>
<div class="c ov" style="left:738.25px;top:660.88px;width:155.81px">557058:f58131cb-b67d-43c7-b30</div>
<div class="c" style="left:895.06px;top:660.88px;width:77.91px">Backlog</div>
<div class="c" style="left:973.46px;top:660.88px;width:77.91px">15/M</div>
</div><div id="chrome">
<svg style="left:13.8px;top:11px;width:19.6px;height:26.9px" viewBox="0 0 44 60"><path d="M4 0h24l16 16v40a4 4 0 0 1-4 4H4a4 4 0 0 1-4-4V4a4 4 0 0 1 4-4z" fill="#22a94f"/><path d="M28 0l16 16H32a4 4 0 0 1-4-4z" fill="#147d38"/><path d="M7.500 24.500v20h28.500v-20zm2.700 2.700h10.200v5.950H10.200zm12.900 0h10.200v5.950H23.100zm-12.900 8.650h10.200v5.950H10.200zm12.900 0h10.200v5.950H23.100z" fill="#fff" fill-rule="evenodd"/></svg>
<div style="left:44.50px;top:10.40px;font-size:13.70px;line-height:13.70px;font-weight:400;color:#1f1f1f;white-space:nowrap;-webkit-text-stroke:.25px #1f1f1f">DEMO Export</div>
<svg style="left:145.20px;top:10.50px;width:13.20px;height:13.20px;" viewBox="0 0 24 24"><path d="M22 9.24l-7.19-.62L12 2 9.190 8.63 2 9.24l5.46 4.73L5.82 21 12 17.27 18.18 21l-1.630-7.030L22 9.240zM12 15.4l-3.760 2.270 1-4.280-3.320-2.880 4.380-.380L12 6.100l1.710 4.040 4.380.380-3.320 2.880 1 4.280L12 15.400z" fill="#444746"/></svg>
<svg style="left:169.20px;top:10.60px;width:13.60px;height:13.60px;" viewBox="0 0 24 24"><path d="M20 6h-8l-2-2H4c-1.100 0-2 .900-2 2v12c0 1.100.900 2 2 2h16c1.100 0 2-.900 2-2V8c0-1.100-.900-2-2-2zm0 12H4V6h5.170l2 2H20v10z" fill="#444746"/><path d="M11 9v3H9.500l3.500 3.500 3.500-3.500H15V9z" fill="#444746" transform="rotate(-90 13 12.250)"/></svg>
<svg style="left:194.10px;top:10.20px;width:14.20px;height:14.20px;" viewBox="0 0 24 24"><path d="M19.350 10.040A7.490 7.490 0 0 0 12 4C9.110 4 6.600 5.640 5.350 8.040A5.994 5.994 0 0 0 0 14c0 3.310 2.690 6 6 6h13c2.760 0 5-2.240 5-5 0-2.640-2.050-4.780-4.650-4.960zM19 18H6c-2.210 0-4-1.790-4-4s1.790-4 4-4h.710C7.370 7.690 9.480 6 12 6c3.040 0 5.500 2.460 5.500 5.500v.500H19c1.660 0 3 1.340 3 3s-1.340 3-3 3z" fill="#444746"/><path d="M8 13.200l2.600 2.600 5-5" stroke="#444746" stroke-width="1.800" fill="none"/></svg>
<div style="left:45.00px;top:28.59px;font-size:11.00px;line-height:11.00px;font-weight:400;color:#1f1f1f;white-space:nowrap;">File</div>
<div style="left:75.00px;top:28.59px;font-size:11.00px;line-height:11.00px;font-weight:400;color:#1f1f1f;white-space:nowrap;">Edit</div>
<div style="left:106.00px;top:28.59px;font-size:11.00px;line-height:11.00px;font-weight:400;color:#1f1f1f;white-space:nowrap;">View</div>
<div style="left:142.00px;top:28.59px;font-size:11.00px;line-height:11.00px;font-weight:400;color:#1f1f1f;white-space:nowrap;">Insert</div>
<div style="left:184.00px;top:28.59px;font-size:11.00px;line-height:11.00px;font-weight:400;color:#1f1f1f;white-space:nowrap;">Format</div>
<div style="left:232.00px;top:28.59px;font-size:11.00px;line-height:11.00px;font-weight:400;color:#1f1f1f;white-space:nowrap;">Data</div>
<div style="left:268.00px;top:28.59px;font-size:11.00px;line-height:11.00px;font-weight:400;color:#1f1f1f;white-space:nowrap;">Tools</div>
<div style="left:306.50px;top:28.59px;font-size:11.00px;line-height:11.00px;font-weight:400;color:#1f1f1f;white-space:nowrap;">Extensions</div>
<div style="left:373.00px;top:28.59px;font-size:11.00px;line-height:11.00px;font-weight:400;color:#1f1f1f;white-space:nowrap;">Help</div>
<div style="left:408.50px;top:28.59px;font-size:11.00px;line-height:11.00px;font-weight:400;color:#1f1f1f;white-space:nowrap;">Gemini</div>
<div style="left:10px;top:49.3px;width:1010px;height:31.4px;border-radius:15.7px;background:#edf2fa"></div>
<div style="left:16.9px;top:54px;width:76.5px;height:21.8px;border-radius:10.9px;background:#f9fbfd"></div>
<svg style="left:23.70px;top:58.40px;width:13.20px;height:13.20px;" viewBox="0 0 24 24"><path d="M15.500 14h-.790l-.280-.270A6.470 6.470 0 0 0 16 9.500 6.500 6.500 0 1 0 9.500 16c1.610 0 3.090-.590 4.230-1.570l.270.280v.790l5 4.990L20.490 19l-4.990-5zm-6 0C7.010 14 5 11.990 5 9.500S7.010 5 9.500 5 14 7.010 14 9.500 11.990 14 9.500 14z" fill="#444746"/></svg>
<div style="left:44.50px;top:60.16px;font-size:10.80px;line-height:10.80px;font-weight:400;color:#444746;white-space:nowrap;">Menus</div>
<svg style="left:101.10px;top:59.80px;width:12.40px;height:12.40px;" viewBox="0 0 24 24"><path d="M7.500 4.500L3.500 8.500l4 4M4 8.500h9.500a5.250 5.250 0 0 1 0 10.500H6.500" stroke="#444746" stroke-width="2" fill="none"/></svg>
<svg style="left:125.10px;top:59.80px;width:12.40px;height:12.40px;" viewBox="0 0 24 24"><path d="M16.500 4.500l4 4-4 4M20 8.500h-9.500a5.250 5.250 0 0 0 0 10.500H17.500" stroke="#444746" stroke-width="2" fill="none"/></svg>
<svg style="left:149.10px;top:58.30px;width:14.60px;height:14.60px;" viewBox="0 0 24 24"><path d="M7 8V3.500h10V8M7 17H3.500v-6.500a2.500 2.500 0 0 1 2.500-2.500h12a2.500 2.500 0 0 1 2.500 2.500V17H17M7 14h10v6.500H7z" stroke="#444746" stroke-width="2" fill="none"/><circle cx="17.500" cy="11.300" r="1.100" fill="#444746"/></svg>
<svg style="left:173.00px;top:58.40px;width:14.40px;height:14.40px;" viewBox="0 0 24 24"><path d="M5 3.500h13v5H5zM18 6h2.500v6H12v3.500M10.300 15.500h3.400v5.500h-3.400z" stroke="#444746" stroke-width="2" fill="none" stroke-linejoin="round"/></svg>
<div style="left:199.50px;top:60.17px;font-size:10.90px;line-height:10.90px;font-weight:400;color:#444746;white-space:nowrap;">100%</div>
<svg style="left:238.00px;top:62.00px;width:6.60px;height:6.60px;" viewBox="0 0 10 10"><path d="M0 2.5h10L5 7.5z" fill="#444746"/></svg>
<div style="left:255.00px;top:57.50px;width:1px;height:15.00px;background:#c7c7c7"></div>
<div style="left:220.00px;top:59.48px;font-size:11.60px;line-height:11.60px;font-weight:400;color:#444746;white-space:nowrap;width:100px;text-align:center;">$</div>
<div style="left:244.50px;top:60.43px;font-size:10.60px;line-height:10.60px;font-weight:400;color:#444746;white-space:nowrap;width:100px;text-align:center;">%</div>
<div style="left:312.00px;top:58.80px;font-size:10.40px;line-height:10.40px;font-weight:700;color:#444746;white-space:nowrap;letter-spacing:-.3px">.0</div>
<svg style="left:319.30px;top:66.70px;width:7.00px;height:7.00px;" viewBox="0 0 10 10"><path d="M9 5H2M4.500 2.500L2 5l2.500 2.500" stroke="#444746" stroke-width="1.500" fill="none"/></svg>
<div style="left:336.80px;top:58.80px;font-size:10.40px;line-height:10.40px;font-weight:700;color:#444746;white-space:nowrap;letter-spacing:-.5px">.00</div>
<svg style="left:343.70px;top:66.70px;width:7.00px;height:7.00px;" viewBox="0 0 10 10"><path d="M1 5h7M5.500 2.500L8 5 5.500 7.500" stroke="#444746" stroke-width="1.500" fill="none"/></svg>
<div style="left:361.80px;top:61.28px;font-size:9.00px;line-height:9.00px;font-weight:400;color:#444746;white-space:nowrap;-webkit-text-stroke:.2px #444746">123</div>
<div style="left:384.50px;top:57.50px;width:1px;height:15.00px;background:#c7c7c7"></div>
<div style="left:397.00px;top:60.17px;font-size:10.90px;line-height:10.90px;font-weight:400;color:#444746;white-space:nowrap;">Defaul...</div>
<svg style="left:448.70px;top:62.00px;width:6.60px;height:6.60px;" viewBox="0 0 10 10"><path d="M0 2.5h10L5 7.5z" fill="#444746"/></svg>
<div style="left:465.50px;top:57.50px;width:1px;height:15.00px;background:#c7c7c7"></div>
<div style="left:475.2px;top:64.7px;width:7.8px;height:1.15px;background:#444746"></div>
<div style="left:491px;top:55.6px;width:26.5px;height:18.2px;border:1px solid #747775;border-radius:3.2px"></div>
<div style="left:454.20px;top:60.43px;font-size:10.60px;line-height:10.60px;font-weight:400;color:#444746;white-space:nowrap;width:100px;text-align:center;">10</div>
<div style="left:523.9px;top:64.7px;width:8.4px;height:1.15px;background:#444746"></div>
<div style="left:527.55px;top:61.1px;width:1.15px;height:8.4px;background:#444746"></div>
<div style="left:541.50px;top:57.50px;width:1px;height:15.00px;background:#c7c7c7"></div>
<div style="left:506.00px;top:60.15px;font-size:11.40px;line-height:11.40px;font-weight:700;color:#444746;white-space:nowrap;width:100px;text-align:center;">B</div>
<div style="left:531.20px;top:60.73px;font-size:12.60px;line-height:12.60px;font-weight:700;color:#444746;white-space:nowrap;width:100px;text-align:center;font-style:italic;font-family:'Liberation Mono',monospace">I</div>
<div style="left:555.20px;top:59.67px;font-size:12.20px;line-height:12.20px;font-weight:400;color:#444746;white-space:nowrap;width:100px;text-align:center;">S</div>
<div style="left:599px;top:64.9px;width:12.6px;height:1.3px;background:#444746"></div><div style="left:600.5px;top:64.1px;width:9.5px;height:.8px;background:#edf2fa"></div><div style="left:600.5px;top:66.2px;width:9.5px;height:.8px;background:#edf2fa"></div>
<div style="left:580.70px;top:58.06px;font-size:10.80px;line-height:10.80px;font-weight:400;color:#444746;white-space:nowrap;width:100px;text-align:center;">A</div>
<div style="left:622.2px;top:70.1px;width:17.5px;height:2.6px;background:#000"></div>
<div style="left:645.50px;top:57.50px;width:1px;height:15.00px;background:#c7c7c7"></div>
<svg style="left:655.30px;top:56.10px;width:13.40px;height:13.40px;" viewBox="0 0 24 20"><path d="M16.560 8.940L7.620 0 6.210 1.410l2.380 2.380-5.150 5.150a1.490 1.490 0 0 0 0 2.120l5.500 5.500c.290.290.680.440 1.060.440s.770-.150 1.060-.440l5.500-5.500c.590-.580.590-1.530 0-2.120zM5.210 10L10 5.210 14.790 10H5.210zM19 11.500s-2 2.170-2 3.500c0 1.100.900 2 2 2s2-.900 2-2c0-1.330-2-3.500-2-3.500z" fill="#444746"/></svg>
<div style="left:653.3px;top:70.1px;width:17.5px;height:2.6px;background:#fbfcfe"></div>
<svg style="left:681.20px;top:59.00px;width:12.60px;height:12.60px;" viewBox="0 0 24 24"><path d="M3 3h18v18H3zM12 3v18M3 12h18" stroke="#444746" stroke-width="2" fill="none"/></svg>
<svg style="left:707.30px;top:58.60px;width:13.40px;height:13.40px;" viewBox="0 0 24 24"><path d="M3 8.500V3h7M14 3h7v5.500M3 15.500V21h7M14 21h7v-5.500M3 12h5.500M6.500 9.500L9 12l-2.500 2.500M21 12h-5.500M17.500 9.500L15 12l2.500 2.500" stroke="#444746" stroke-width="2" fill="none"/></svg>
<svg style="left:726.70px;top:62.00px;width:6.60px;height:6.60px;" viewBox="0 0 10 10"><path d="M0 2.5h10L5 7.5z" fill="#444746"/></svg>
<div style="left:737.50px;top:57.50px;width:1px;height:15.00px;background:#c7c7c7"></div>
<svg style="left:744.50px;top:58.80px;width:13.00px;height:13.00px;" viewBox="0 0 24 24"><path d="M3 4h18M3 9.300h12M3 14.700h18M3 20h12" stroke="#444746" stroke-width="2" fill="none"/></svg>
<svg style="left:762.30px;top:62.00px;width:6.60px;height:6.60px;" viewBox="0 0 10 10"><path d="M0 2.5h10L5 7.5z" fill="#444746"/></svg>
<svg style="left:776.50px;top:58.80px;width:13.00px;height:13.00px;" viewBox="0 0 24 24"><path d="M12 3v11M7.500 10l4.500 4.500 4.500-4.500M4 20h16" stroke="#444746" stroke-width="2" fill="none"/></svg>
<svg style="left:793.20px;top:62.00px;width:6.60px;height:6.60px;" viewBox="0 0 10 10"><path d="M0 2.5h10L5 7.5z" fill="#444746"/></svg>
<svg style="left:807.50px;top:58.80px;width:13.00px;height:13.00px;" viewBox="0 0 24 24"><path d="M5 4v16M10 12h10M16.500 8l4 4-4 4M10 4v3M10 17v3" stroke="#444746" stroke-width="2" fill="none"/></svg>
<svg style="left:824.70px;top:62.00px;width:6.60px;height:6.60px;" viewBox="0 0 10 10"><path d="M0 2.5h10L5 7.5z" fill="#444746"/></svg>
<div style="left:795.00px;top:59.53px;font-size:10.60px;line-height:10.60px;font-weight:400;color:#444746;white-space:nowrap;width:100px;text-align:center;">A</div>
<svg style="left:841.00px;top:65.70px;width:11.00px;height:11.00px;" viewBox="0 0 16 10"><path d="M1 5h14M12 2l3 3-3 3" stroke="#444746" stroke-width="1.600" fill="none"/></svg>
<svg style="left:856.70px;top:62.00px;width:6.60px;height:6.60px;" viewBox="0 0 10 10"><path d="M0 2.5h10L5 7.5z" fill="#444746"/></svg>
<div style="left:869.10px;top:57.50px;width:1px;height:15.00px;background:#c7c7c7"></div>
<svg style="left:877.20px;top:58.10px;width:14.40px;height:14.40px;" viewBox="0 0 24 24"><path d="M3.900 12c0-1.710 1.390-3.100 3.100-3.100h4V7H7c-2.760 0-5 2.240-5 5s2.240 5 5 5h4v-1.900H7c-1.710 0-3.100-1.390-3.100-3.100zM8 13h8v-2H8v2zm9-6h-4v1.900h4c1.710 0 3.100 1.390 3.100 3.100s-1.390 3.100-3.100 3.100h-4V17h4c2.760 0 5-2.240 5-5s-2.240-5-5-5z" fill="#444746"/></svg>
<svg style="left:901.90px;top:58.70px;width:14.20px;height:14.20px;" viewBox="0 0 24 24"><path d="M3 3.500h18v13.500H8.500L3 21.500z" stroke="#444746" stroke-width="2" fill="none" stroke-linejoin="round"/><path d="M12 6.500v7.500M8.250 10.250h7.500" stroke="#444746" stroke-width="2"/></svg>
<svg style="left:926.20px;top:58.50px;width:13.60px;height:13.60px;" viewBox="0 0 24 24"><path d="M4 3.500h16v17H4z" stroke="#444746" stroke-width="2" fill="none" stroke-linejoin="round"/><path d="M8.500 17v-5M12 17V8M15.500 17v-3" stroke="#444746" stroke-width="2"/></svg>
<div style="left:947px;top:54.2px;width:22.4px;height:22.2px;border-radius:3.5px;background:#d3e3fd"></div>
<svg style="left:950.90px;top:58.00px;width:14.60px;height:14.60px;" viewBox="0 0 24 24"><path d="M4.250 5.610C6.270 8.200 10 13 10 13v6c0 .550.450 1 1 1h2c.550 0 1-.450 1-1v-6s3.720-4.800 5.740-7.390A.998.998 0 0 0 18.950 4H5.040c-.830 0-1.300.950-.790 1.610z" fill="#041e49"/></svg>
<svg style="left:973.70px;top:59.00px;width:14.00px;height:14.00px;" viewBox="0 0 24 24"><path d="M5 7.500h15.500v13H5zM5 12h15.500M10.200 12v8.500M15.400 12v8.500M2.500 16V4.500H16" stroke="#444746" stroke-width="1.900" fill="none" stroke-linejoin="round"/></svg>
<svg style="left:992.20px;top:62.00px;width:6.60px;height:6.60px;" viewBox="0 0 10 10"><path d="M0 2.5h10L5 7.5z" fill="#444746"/></svg>
<div style="left:0;top:86px;width:998px;height:22.3px;background:#fff"></div>
<div style="left:0;top:107.5px;width:998px;height:.8px;background:#c4c7c5"></div>
<div style="left:7.70px;top:92.94px;font-size:10.00px;line-height:10.00px;font-weight:400;color:#1f1f1f;white-space:nowrap;transform:scaleX(.89);transform-origin:0 0;-webkit-text-stroke:.2px #1f1f1f">A1:N168</div>
<svg style="left:63.90px;top:94.10px;width:5.60px;height:5.60px;" viewBox="0 0 10 10"><path d="M0 2.5h10L5 7.5z" fill="#444746"/></svg>
<div style="left:79px;top:91.5px;width:1px;height:12.7px;background:#c7c7c7"></div>
<div style="left:88.80px;top:91.69px;font-size:11.00px;line-height:11.00px;font-weight:400;color:#8a8d8b;white-space:nowrap;font-style:italic;font-family:'Liberation Serif',serif;letter-spacing:.2px">fx</div>
<div style="left:106.30px;top:92.07px;font-size:10.90px;line-height:10.90px;font-weight:400;color:#1f1f1f;white-space:nowrap;">Helper Column</div>
</div><div id="overlay"></div>
<div id="dialog">
<svg style="left:0;top:0;width:400px;height:300px" viewBox="0 0 400 300"><rect x=".5" y="0" width="399.3" height="299.25" rx="7" fill="#fff"/><rect x="20.60" y="54.30" width="13.40" height="13.50" rx="1.60" fill="#188038" stroke="#188038" stroke-width="0.20"/><rect x="62.53" y="90.92" width="76.15" height="27.95" rx="3.00" fill="#fff" stroke="#dadce0" stroke-width="0.85"/><rect x="62.53" y="149.03" width="97.35" height="27.95" rx="3.00" fill="#f1f3f4" stroke="#dadce0" stroke-width="0.85"/><rect x="20.53" y="205.93" width="168.85" height="27.25" rx="3.00" fill="#fff" stroke="#dadce0" stroke-width="0.85"/><rect x="234.72" y="252.72" width="74.45" height="26.75" rx="3.00" fill="#fff" stroke="#dadce0" stroke-width="0.85"/><rect x="318.90" y="252.40" width="61.10" height="27.40" rx="3.00" fill="#188038" stroke="#188038" stroke-width="0.20"/></svg>
<div style="left:20.00px;top:21.92px;font-size:17.70px;line-height:17.70px;font-weight:400;color:#1f1f1f;white-space:nowrap;transform:scaleX(.947);transform-origin:0 0;-webkit-text-stroke:.2px #1f1f1f">Sort range from A1 to N168</div>
<svg style="left:362.80px;top:24.60px;width:9.40px;height:9.40px" viewBox="0 0 10 10"><path d="M.6.6l8.800 8.800M9.400.6L.6 9.400" stroke="#5f6368" stroke-width="1.050" fill="none"/></svg>
<svg style="left:20.55px;top:54.30px;width:13.50px;height:13.50px" viewBox="0 0 18 18"><path d="M3.800 9.300l3.300 3.300 7.100-7.200" stroke="#fff" stroke-width="2" fill="none"/></svg>
<div style="left:44.60px;top:56.63px;font-size:10.60px;line-height:10.60px;font-weight:400;color:#202124;white-space:nowrap;">Data has header row</div>
<div style="left:20.60px;top:99.83px;font-size:10.60px;line-height:10.60px;font-weight:400;color:#202124;white-space:nowrap;">Sort by</div>
<div style="left:70.50px;top:99.81px;font-size:10.50px;line-height:10.50px;font-weight:400;color:#202124;white-space:nowrap;">Parent key</div>
<svg style="left:125.60px;top:103.60px;width:6.40px;height:3.40px" viewBox="0 0 10 5"><path d="M0 0h10L5 5z" fill="#3c4043"/></svg>
<svg style="left:174.90px;top:98.40px;width:13.00px;height:13.00px" viewBox="0 0 26 26"><circle cx="13" cy="13" r="10.700" stroke="#188038" stroke-width="2.600" fill="#fff"/><circle cx="13" cy="13" r="5.800" fill="#188038"/></svg>
<div style="left:192.20px;top:99.97px;font-size:10.90px;line-height:10.90px;font-weight:400;color:#202124;white-space:nowrap;">A to Z</div>
<svg style="left:237.80px;top:98.30px;width:13.00px;height:13.00px" viewBox="0 0 26 26"><circle cx="13" cy="13" r="11.400" stroke="#d5d8dc" stroke-width="1.800" fill="#fff"/></svg>
<div style="left:255.20px;top:99.97px;font-size:10.90px;line-height:10.90px;font-weight:400;color:#202124;white-space:nowrap;">Z to A</div>
<div style="left:20.50px;top:134.10px;width:358.50px;height:1.00px;background:#e3e5e8"></div>
<div style="left:20.60px;top:157.63px;font-size:10.60px;line-height:10.60px;font-weight:400;color:#202124;white-space:nowrap;">then by</div>
<div style="left:70.30px;top:157.96px;font-size:10.80px;line-height:10.80px;font-weight:400;color:#202124;white-space:nowrap;">Helper Column</div>
<svg style="left:146.80px;top:161.50px;width:6.40px;height:3.40px" viewBox="0 0 10 5"><path d="M0 0h10L5 5z" fill="#3c4043"/></svg>
<svg style="left:174.90px;top:156.20px;width:13.00px;height:13.00px" viewBox="0 0 26 26"><circle cx="13" cy="13" r="10.700" stroke="#188038" stroke-width="2.600" fill="#fff"/><circle cx="13" cy="13" r="5.800" fill="#188038"/></svg>
<div style="left:192.20px;top:157.87px;font-size:10.90px;line-height:10.90px;font-weight:400;color:#202124;white-space:nowrap;">A to Z</div>
<svg style="left:237.80px;top:156.10px;width:13.00px;height:13.00px" viewBox="0 0 26 26"><circle cx="13" cy="13" r="11.400" stroke="#d5d8dc" stroke-width="1.800" fill="#fff"/></svg>
<div style="left:255.20px;top:157.87px;font-size:10.90px;line-height:10.90px;font-weight:400;color:#202124;white-space:nowrap;">Z to A</div>
<svg style="left:360.30px;top:155.80px;width:12.40px;height:14.40px" viewBox="0 0 12.400 14.400"><path d="M.4 2.300h11.600M4.100 2.100V.7h4.200v1.400M1.700 2.500v10.100a1.100 1.100 0 0 0 1.100 1.100h6.800a1.100 1.100 0 0 0 1.100-1.100V2.500M4.750 5v6.200M7.650 5v6.200" stroke="#5f6368" stroke-width="1.150" fill="none"/></svg>
<div style="left:20.50px;top:191.80px;width:358.50px;height:1.00px;background:#e3e5e8"></div>
<div style="left:4.90px;top:213.73px;font-size:11.30px;line-height:11.30px;font-weight:400;color:#188038;white-space:nowrap;width:200px;text-align:center;letter-spacing:.36px;-webkit-text-stroke:.4px #188038">Add another sort column</div>
<div style="left:172.20px;top:259.93px;font-size:11.30px;line-height:11.30px;font-weight:400;color:#188038;white-space:nowrap;width:200px;text-align:center;letter-spacing:.3px;-webkit-text-stroke:.4px #188038">Cancel</div>
<div style="left:249.50px;top:259.93px;font-size:11.30px;line-height:11.30px;font-weight:400;color:#fff;white-space:nowrap;width:200px;text-align:center;letter-spacing:.3px;-webkit-text-stroke:.4px #fff">Sort</div>
</div></body></html>
